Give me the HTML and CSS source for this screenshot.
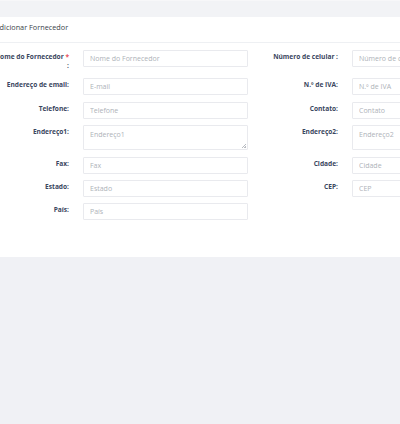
FILE: index.html
```html
<!DOCTYPE html>
<html lang="pt">
<head>
<meta charset="utf-8">
<title>Adicionar Fornecedor</title>
<link rel="stylesheet" href="styles.css">
</head>
<body>
<div class="page">
  <div class="topbar">
    <span class="topbar-icon">
      <svg width="8" height="8" viewBox="0 0 16 16"><path fill="#8a8f99" d="M8 5.2a2.8 2.8 0 1 0 0 5.6 2.8 2.8 0 0 0 0-5.6zm6.2 1.6-1.5-.3a5 5 0 0 0-.5-1.2l.9-1.3-1.1-1.1-1.3.9a5 5 0 0 0-1.2-.5L9.2 1.8H7.6l-.3 1.5a5 5 0 0 0-1.2.5l-1.3-.9-1.1 1.1.9 1.3a5 5 0 0 0-.5 1.2l-1.5.3v1.6l1.5.3c.1.4.3.8.5 1.2l-.9 1.3 1.1 1.1 1.3-.9c.4.2.8.4 1.2.5l.3 1.5h1.6l.3-1.5c.4-.1.8-.3 1.2-.5l1.3.9 1.1-1.1-.9-1.3c.2-.4.4-.8.5-1.2l1.5-.3z"/></svg>
    </span>
  </div>

  <div class="card">
    <div class="card-header">Adicionar Fornecedor</div>
    <div class="card-body">
      <form class="form-grid">
        <div class="field">
          <label class="field-label">Nome do Fornecedor&nbsp;<span class="req">*</span> :</label>
          <input class="field-input" type="text" placeholder="Nome do Fornecedor">
        </div>
        <div class="field">
          <label class="field-label">Número de celular :</label>
          <input class="field-input" type="text" placeholder="Número de celular">
        </div>

        <div class="field">
          <label class="field-label">Endereço de email:</label>
          <input class="field-input" type="text" placeholder="E-mail">
        </div>
        <div class="field">
          <label class="field-label">N.º de IVA:</label>
          <input class="field-input" type="text" placeholder="N.º de IVA">
        </div>

        <div class="field">
          <label class="field-label">Telefone:</label>
          <input class="field-input" type="text" placeholder="Telefone">
        </div>
        <div class="field">
          <label class="field-label">Contato:</label>
          <input class="field-input" type="text" placeholder="Contato">
        </div>

        <div class="field">
          <label class="field-label">Endereço1:</label>
          <div class="area-wrap">
            <textarea class="field-input field-area" placeholder="Endereço1"></textarea>
          </div>
        </div>
        <div class="field">
          <label class="field-label">Endereço2:</label>
          <div class="area-wrap">
            <textarea class="field-input field-area" placeholder="Endereço2"></textarea>
          </div>
        </div>

        <div class="field">
          <label class="field-label">Fax:</label>
          <input class="field-input" type="text" placeholder="Fax">
        </div>
        <div class="field">
          <label class="field-label">Cidade:</label>
          <input class="field-input" type="text" placeholder="Cidade">
        </div>

        <div class="field">
          <label class="field-label">Estado:</label>
          <input class="field-input" type="text" placeholder="Estado">
        </div>
        <div class="field">
          <label class="field-label">CEP:</label>
          <input class="field-input" type="text" placeholder="CEP">
        </div>

        <div class="field">
          <label class="field-label">País:</label>
          <input class="field-input" type="text" placeholder="País">
        </div>
      </form>
    </div>
  </div>
</div>
</body>
</html>
```

FILE: styles.css
```css
html, body {
  margin: 0;
  padding: 0;
  background: #f0f1f5;
  font-family: "Open Sans", "Liberation Sans", sans-serif;
}

.page {
  width: 400px;
  height: 424px;
  overflow: hidden;
  position: relative;
}

/* top navigation strip */
.topbar {
  height: 17px;
  background: #f2f3f6;
  border-top: 1px solid #f7f7f9;
  box-sizing: border-box;
  display: flex;
  justify-content: flex-end;
  align-items: center;
}

.topbar-icon {
  display: block;
  width: 4px;
  height: 8px;
  overflow: hidden;
  margin-top: -2px;
}

/* form card */
.card {
  background: #ffffff;
  margin-left: -13px;
  width: 560px;
}

.card-header {
  height: 26px;
  box-sizing: border-box;
  padding: 5px 8px 0 8px;
  font-size: 7.3px;
  line-height: 10px;
  color: #3a3f4a;
  border-bottom: 1px solid #eef0f3;
}

.card-body {
  padding: 7px 0 37px 0;
}

.form-grid {
  display: grid;
  grid-template-columns: 261px 261px;
  column-gap: 8px;
  row-gap: 6.4px;
  margin: 0;
}

.field {
  display: grid;
  grid-template-columns: 82px 165px;
  column-gap: 14px;
  align-items: start;
}

.field-label {
  text-align: right;
  font-size: 6.6px;
  line-height: 9px;
  font-weight: 700;
  color: #3a4660;
  padding: 2px 0 2px 7px;
}

.req {
  color: #e8505b;
}

.field-input {
  box-sizing: border-box;
  display: block;
  height: 17px;
  width: 165px;
  margin: 0;
  padding: 0 6px;
  border: 1px solid #e9eaee;
  border-radius: 1px;
  font-family: inherit;
  font-size: 7px;
  color: #555;
  background: #fff;
  outline: none;
}

.field-input::placeholder {
  color: #aeb2b8;
}

/* textarea with a small, light resize grip */
.area-wrap {
  position: relative;
  width: 165px;
}

.area-wrap::after {
  content: "";
  position: absolute;
  right: 2px;
  bottom: 2px;
  width: 4px;
  height: 4px;
  background:
    linear-gradient(135deg, transparent 45%, #b9bcc2 45%, #b9bcc2 58%, transparent 58%, transparent 75%, #b9bcc2 75%, #b9bcc2 88%, transparent 88%);
  pointer-events: none;
}

.field-area {
  height: 25px;
  padding-top: 4px;
  resize: none;
  line-height: 9px;
}
```
